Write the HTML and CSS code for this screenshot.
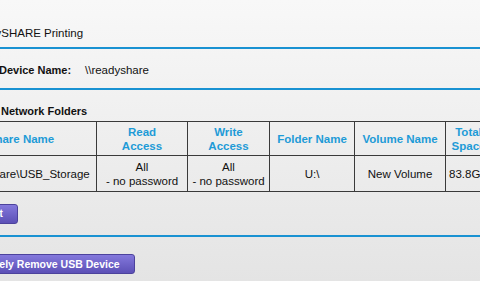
FILE: index.html
```html
<!DOCTYPE html>
<html>
<head>
<meta charset="utf-8">
<link rel="stylesheet" href="styles.css">
</head>
<body>
<div class="page">
  <div class="title">ReadySHARE Printing</div>
  <div class="divider"></div>
  <div class="device-row">
    <span class="label">Device Name:</span>
    <span class="value">\\readyshare</span>
  </div>
  <div class="divider"></div>
  <div class="folders-title">Network Folders</div>
  <table class="folders">
    <colgroup>
      <col class="c1"><col class="c2"><col class="c3"><col class="c4"><col class="c5"><col class="c6"><col class="c7">
    </colgroup>
    <thead>
      <tr>
        <th>Share Name</th>
        <th>Read<br>Access</th>
        <th>Write<br>Access</th>
        <th>Folder Name</th>
        <th>Volume Name</th>
        <th>Total<br>Space</th>
        <th>Free<br>Space</th>
      </tr>
    </thead>
    <tbody>
      <tr>
        <td>\\readyshare\USB_Storage</td>
        <td>All<br>- no password</td>
        <td>All<br>- no password</td>
        <td>U:\</td>
        <td>New Volume</td>
        <td>83.8GB</td>
        <td>46.2GB</td>
      </tr>
    </tbody>
  </table>
  <div class="btn-row"><button class="btn btn-edit">Edit</button></div>
  <div class="divider"></div>
  <div class="btn-row2"><button class="btn btn-remove">Safely Remove USB Device</button></div>
</div>
</body>
</html>
```

FILE: styles.css
```css
html, body {
  margin: 0;
  padding: 0;
}
body {
  width: 480px;
  height: 281px;
  overflow: hidden;
  background: linear-gradient(#f8f8f8, #e4e4e4);
  font-family: "Liberation Sans", Arial, sans-serif;
  font-size: 11.5px;
  color: #111;
}
.page {
  margin-left: -60px;
  width: 700px;
}
.title {
  padding: 26px 0 7px 28px;
  line-height: 14px;
}
.divider {
  height: 2px;
  background: #1992d2;
}
.device-row {
  display: flex;
  padding: 14px 0 11px 59px;
  line-height: 14px;
}
.label {
  width: 86px;
  font-weight: bold;
  font-size: 11px;
}
.folders-title {
  padding: 14px 0 0 61px;
  line-height: 14px;
  font-weight: bold;
  font-size: 11px;
  margin-bottom: 3px;
}
.folders {
  margin-left: 5px;
  border-collapse: collapse;
  table-layout: fixed;
  width: 617px;
}
.folders th, .folders td {
  border: 1px solid #3a3a3a;
  text-align: center;
  line-height: 14px;
  padding: 0;
  overflow: hidden;
  white-space: nowrap;
}
.folders th {
  height: 33px;
  color: #1e9bd7;
  font-weight: bold;
  font-size: 11.5px;
}
.folders td {
  height: 35px;
}
.c1 { width: 151px; }
.c2 { width: 91px; }
.c3 { width: 82px; }
.c4 { width: 85px; }
.c5 { width: 91px; }
.c6 { width: 46px; }
.c7 { width: 71px; }
.btn-row {
  padding: 12px 0 0 29px;
  height: 20px;
  margin-bottom: 11px;
}
.btn-row2 {
  padding: 17px 0 0 26px;
}
.btn {
  height: 20px;
  border: 1px solid #4c429c;
  border-radius: 3px;
  background: linear-gradient(#8378dc, #5c50b6);
  color: #fff;
  font-family: "Liberation Sans", Arial, sans-serif;
  font-weight: bold;
  font-size: 10px;
  line-height: 18px;
  padding: 0 14px;
  box-sizing: border-box;
}
.btn-remove {
  font-size: 10.5px;
  padding: 0 14px 0 16px;
}
```
